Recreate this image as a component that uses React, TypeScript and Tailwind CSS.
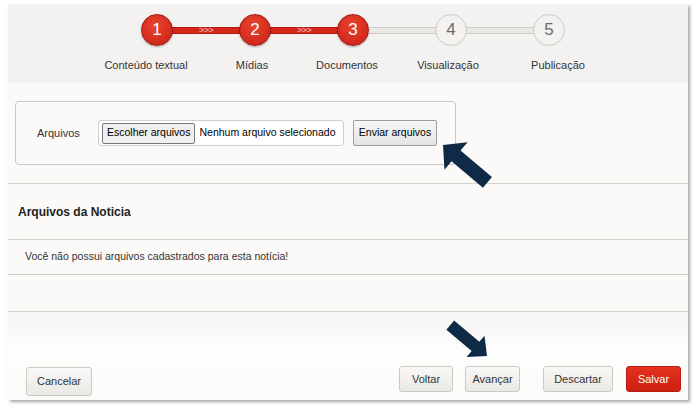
import React from "react";

const font = { fontFamily: '"Liberation Sans", Arial, sans-serif' };

function Circle({ n, active }: { n: number; active: boolean }) {
  return active ? (
    <div className="w-[32px] h-[32px] rounded-full flex items-center justify-center text-white text-[17px] border border-[#a3170f] bg-[radial-gradient(circle_at_45%_35%,#e8432f,#c81f14)] shadow-[0_1px_2px_rgba(0,0,0,0.3)] shrink-0 relative z-10">
      {n}
    </div>
  ) : (
    <div className="w-[32px] h-[32px] rounded-full flex items-center justify-center text-[#6b6b6b] text-[17px] border border-[#cfcbc6] bg-[#f3f2f0] shrink-0 relative z-10">
      {n}
    </div>
  );
}

function Connector({ active }: { active: boolean }) {
  return active ? (
    <div className="w-[68px] -mx-[1px] h-[7px] bg-[#d42619] border-y border-[#b51a10] flex items-center justify-center">
      <span className="text-[#f09a90] text-[9px] leading-none font-bold italic tracking-[-0.5px]">{">>>"}</span>
    </div>
  ) : (
    <div className="w-[68px] -mx-[1px] h-[7px] bg-[#ebe9e6] border-y border-[#cfcbc6]" />
  );
}

function Btn({ children, w, h, red }: { children: React.ReactNode; w: string; h?: string; red?: boolean }) {
  const hh = h ?? "h-[26px]";
  return red ? (
    <div className={`${w} ${hh} rounded-[3px] border border-[#b71b11] bg-[linear-gradient(#e4321f,#d0200f)] text-white text-[11px] flex items-center justify-center`}>
      {children}
    </div>
  ) : (
    <div className={`${w} ${hh} rounded-[3px] border border-[#cbc8c3] bg-[linear-gradient(#f9f8f6,#ebe9e5)] text-[#333] text-[11px] flex items-center justify-center`}>
      {children}
    </div>
  );
}

function Arrow({ x, y, a, L, H, W, w }: { x: number; y: number; a: number; L: number; H: number; W: number; w: number }) {
  const pts = `0,0 ${-H},${-W} ${-H},${-w} ${-L},${-w} ${-L},${w} ${-H},${w} ${-H},${W}`;
  return (
    <g transform={`translate(${x},${y}) rotate(${a})`}>
      <polygon points={pts} fill="#0e2a47" />
    </g>
  );
}

export default function App() {
  const steps: [string, string][] = [
    ["Conteúdo textual", "w-[100px]"],
    ["Mídias", "w-[112px]"],
    ["Documentos", "w-[78px]"],
    ["Visualização", "w-[124px]"],
    ["Publicação", "w-[96px]"],
  ];
  return (
    <div className="relative w-[694px] h-[411px] bg-white overflow-hidden" style={font}>
      <div className="ml-[8px] pt-[4px] w-[680px]">
        <div className="w-[680px] h-[396px] bg-[#fbfaf9] shadow-[2px_2px_3px_rgba(0,0,0,0.35)] flex flex-col">
          {/* header */}
          <div className="h-[79px] bg-[#f3f2f1] pt-[10px]">
            <div className="flex items-center pl-[133px]">
              {[1, 2, 3, 4, 5].map((n) => (
                <React.Fragment key={n}>
                  <Circle n={n} active={n <= 3} />
                  {n < 5 && <Connector active={n < 3} />}
                </React.Fragment>
              ))}
            </div>
            <div className="flex pl-[88px] mt-[11px]">
              {steps.map(([s, w]) => (
                <div key={s} className={`${w} text-center text-[11px] text-[#333] whitespace-nowrap`}>
                  {s}
                </div>
              ))}
            </div>
          </div>
          {/* upload */}
          <div className="h-[100px] pt-[18px] pl-[7px]">
            <div className="w-[441px] h-[64px] border border-[#c9c7c4] rounded-[4px] flex items-center">
              <div className="ml-[21px] w-[61px] text-[11px] text-[#333]">Arquivos</div>
              <div className="w-[246px] h-[26px] border border-[#cfcfcf] rounded-[3px] bg-white flex items-center pl-[3px] overflow-hidden">
                <div className="h-[21px] px-[4px] border border-[#7a7a7a] rounded-[2px] bg-[#efefef] text-[10.5px] text-black flex items-center whitespace-nowrap shrink-0">
                  Escolher arquivos
                </div>
                <div className="ml-[4px] text-[10.5px] text-black whitespace-nowrap">Nenhum arquivo selecionado</div>
              </div>
              <div className="ml-[9px] w-[84px] h-[26px] border border-[#9c9c9c] rounded-[2px] bg-[linear-gradient(#f7f7f7,#e3e3e3)] text-[10.5px] text-black flex items-center justify-center whitespace-nowrap">
                Enviar arquivos
              </div>
            </div>
          </div>
          {/* list */}
          <div className="border-t border-[#d3d0cc] h-[56px] flex items-center pl-[10px]">
            <span className="text-[12px] font-bold text-[#222]">Arquivos da Noticia</span>
          </div>
          <div className="border-t border-[#d3d0cc] h-[35px] flex items-center pl-[17px]">
            <span className="text-[10.5px] text-[#333]">Você não possui arquivos cadastrados para esta notícia!</span>
          </div>
          <div className="border-t border-[#cfccc8] h-[37px]" />
          <div className="border-t border-[#d3d0cc] flex-1 bg-[linear-gradient(#f8f7f5_20%,#fefefd_45%,#fbfaf8)] flex items-end pb-[7px] pl-[18px] pr-[7px]">
            <div className="mb-[-3px]">
              <Btn w="w-[66px]" h="h-[29px]">Cancelar</Btn>
            </div>
            <div className="flex-1" />
            <div className="flex mb-[1px]">
              <Btn w="w-[54px]">Voltar</Btn>
              <div className="ml-[12px]">
                <Btn w="w-[55px]">Avançar</Btn>
              </div>
              <div className="ml-[23px]">
                <Btn w="w-[70px]">Descartar</Btn>
              </div>
              <div className="ml-[13px]">
                <Btn w="w-[55px]" red>
                  Salvar
                </Btn>
              </div>
            </div>
          </div>
        </div>
      </div>
      <svg className="absolute left-0 top-0 pointer-events-none" width={694} height={411}>
        <Arrow x={443} y={145} a={220} L={58} H={17} W={18} w={7} />
        <Arrow x={487} y={356} a={40} L={48} H={15} W={14} w={6} />
      </svg>
    </div>
  );
}
